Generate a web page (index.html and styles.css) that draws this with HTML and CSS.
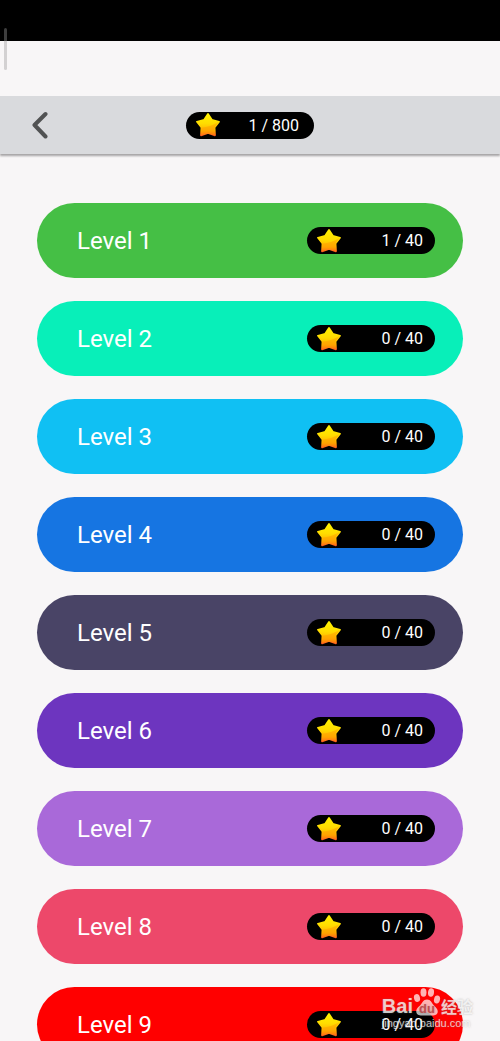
FILE: index.html
```
<!DOCTYPE html>
<html lang="en">
<head>
<meta charset="utf-8">
<meta name="viewport" content="width=device-width, initial-scale=1">
<title>Levels</title>
<link rel="stylesheet" href="styles.css">
</head>
<body>
<svg class="defs" aria-hidden="true">
  <defs>
    <linearGradient id="gold" x1="0" y1="0" x2="0" y2="1">
      <stop offset="0" stop-color="#fff200"/>
      <stop offset="0.45" stop-color="#ffdc00"/>
      <stop offset="0.8" stop-color="#ffb000"/>
      <stop offset="1" stop-color="#ff6020"/>
    </linearGradient>
    <symbol id="star" viewBox="0 0 24 24">
      <path d="M12 1 15.8 6.800 23 8.800 18.500 14.500 19 22.300 12 19.800 5 22.300 5.500 14.500 1 8.800 8.200 6.800Z" fill="url(#gold)" stroke="url(#gold)" stroke-width="1.800" stroke-linejoin="round"/>
      <path d="M5.500 14.500 Q14 14 22.500 9 L18.500 14.500 19 22.300 12 19.800 5 22.300Z" fill="#ff9000" opacity="0.400"/>
    </symbol>
  </defs>
</svg>
<div class="screen">
  <div class="status-bar"></div>
  <div class="spacer"></div>
  <header class="toolbar">
    <button class="back" type="button" aria-label="Back">
      <svg class="back-icon" viewBox="0 0 16 28" aria-hidden="true"><path d="M13.500 3 2.500 14 13.500 25.500" fill="none" stroke="#515253" stroke-width="4" stroke-linecap="round" stroke-linejoin="round"/></svg>
    </button>
    <div class="badge badge-total"><svg class="star" aria-hidden="true"><use href="#star"/></svg><span>1 / 800</span></div>
  </header>
  <main class="levels">
    <button type="button" class="level green"><span>Level 1</span><span class="badge"><svg class="star" aria-hidden="true"><use href="#star"/></svg><span>1 / 40</span></span></button>
    <button type="button" class="level mint"><span>Level 2</span><span class="badge"><svg class="star" aria-hidden="true"><use href="#star"/></svg><span>0 / 40</span></span></button>
    <button type="button" class="level sky"><span>Level 3</span><span class="badge"><svg class="star" aria-hidden="true"><use href="#star"/></svg><span>0 / 40</span></span></button>
    <button type="button" class="level blue"><span>Level 4</span><span class="badge"><svg class="star" aria-hidden="true"><use href="#star"/></svg><span>0 / 40</span></span></button>
    <button type="button" class="level slate"><span>Level 5</span><span class="badge"><svg class="star" aria-hidden="true"><use href="#star"/></svg><span>0 / 40</span></span></button>
    <button type="button" class="level violet"><span>Level 6</span><span class="badge"><svg class="star" aria-hidden="true"><use href="#star"/></svg><span>0 / 40</span></span></button>
    <button type="button" class="level lilac"><span>Level 7</span><span class="badge"><svg class="star" aria-hidden="true"><use href="#star"/></svg><span>0 / 40</span></span></button>
    <button type="button" class="level rose"><span>Level 8</span><span class="badge"><svg class="star" aria-hidden="true"><use href="#star"/></svg><span>0 / 40</span></span></button>
    <button type="button" class="level red"><span>Level 9</span><span class="badge"><svg class="star" aria-hidden="true"><use href="#star"/></svg><span>0 / 40</span></span></button>
  </main>
  <div class="edge-handle"></div>
  <div class="watermark">
    <div class="brand">
      <span class="brand-latin">Bai</span>
      <svg class="paw" viewBox="0 0 28 30" aria-hidden="true">
        <g class="paw-shape">
          <ellipse cx="4" cy="11" rx="3" ry="4" transform="rotate(-15 4 11)"/>
          <ellipse cx="10.500" cy="5.500" rx="3" ry="4.200"/>
          <ellipse cx="18" cy="5.500" rx="3" ry="4.200" transform="rotate(8 18 5.500)"/>
          <ellipse cx="24" cy="12.500" rx="3" ry="4" transform="rotate(12 24 12.500)"/>
          <path d="M14 12.500C10 12.500 9.500 16 7 18.500C4 21 2.500 23 3.500 26C4.500 29 8 28.500 14 28.500C20 28.500 23.500 29 24.500 26C25.500 23 23.500 21 21 18.500C18.500 16 18 12.500 14 12.500Z"/>
        </g>
        <text class="paw-text" x="14" y="26" text-anchor="middle">du</text>
      </svg>
      <span class="brand-cjk" lang="zh">经验</span>
    </div>
    <div class="site">jingyan.baidu.com</div>
  </div>
</div>
</body>
</html>
```
FILE: styles.css
```
* {
  box-sizing: border-box;
}

body {
  margin: 0;
  background: #f8f6f7;
  font-family: Roboto, "Liberation Sans", sans-serif;
}

button {
  border: 0;
  font: inherit;
  color: inherit;
}

.defs {
  position: absolute;
  width: 0;
  height: 0;
}

.screen {
  position: relative;
  height: 100vh;
  overflow: hidden;
}

.status-bar {
  height: 41px;
  background: #000;
}

.spacer {
  height: 55px;
}

.toolbar {
  display: grid;
  grid-template-columns: 1fr auto 1fr;
  align-items: center;
  height: 58px;
  padding: 0 32px;
  background: #d9dadd;
  box-shadow: 0 2px 2px #a5a3a4;
}

.back {
  justify-self: start;
  display: flex;
  padding: 0;
  background: none;
}

.back-icon {
  width: 16px;
  height: 28px;
}

.badge {
  display: flex;
  align-items: center;
  justify-content: space-between;
  width: 128px;
  height: 27px;
  padding: 0 12px 0 10px;
  border-radius: 14px;
  background: #000;
  color: #fff;
  font-size: 16px;
  line-height: 27px;
}

.badge-total {
  padding-right: 15px;
}

.star {
  width: 24px;
  height: 24px;
}

.levels {
  display: flex;
  flex-direction: column;
  gap: 23px;
  padding: 49px 37px;
}

.level {
  display: flex;
  flex-shrink: 0;
  align-items: center;
  justify-content: space-between;
  height: 75px;
  padding: 0 28px 0 40px;
  border-radius: 38px;
  color: #fff;
  font-size: 24px;
  line-height: 28px;
}

.green { background: #45bf45; }
.mint { background: #08efb9; }
.sky { background: #10c0f3; }
.blue { background: #1675e2; }
.slate { background: #494466; }
.violet { background: #6d35bf; }
.lilac { background: #a969d9; }
.rose { background: #ed486a; }
.red { background: #ff0000; }

.edge-handle {
  position: absolute;
  top: 28px;
  left: 4px;
  width: 3px;
  height: 42px;
  border-radius: 2px;
  background: rgba(155, 155, 155, 0.4);
}

.watermark {
  position: absolute;
  right: 27px;
  bottom: 11px;
  color: rgba(255, 255, 255, 0.75);
  text-shadow: 0 0 2px rgba(120, 120, 120, 0.5);
}

.brand {
  display: flex;
  align-items: flex-end;
  height: 30px;
}

.brand-latin {
  font: bold 20px/22px "Liberation Sans", sans-serif;
}

.paw {
  width: 28px;
  height: 30px;
}

.paw-shape {
  fill: #fff;
  opacity: 0.7;
}

.paw-text {
  fill: #c05050;
  font: bold 13px "Liberation Sans", sans-serif;
}

.brand-cjk {
  font: bold 16px/22px "Noto Sans CJK SC", sans-serif;
}

.site {
  font: 11px/13px "Liberation Sans", sans-serif;
}
```
